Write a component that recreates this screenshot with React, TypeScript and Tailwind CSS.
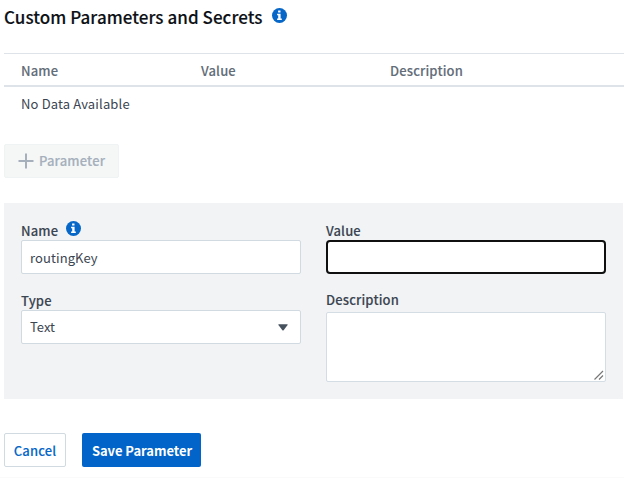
import React from "react";

function InfoIcon() {
  return (
    <svg viewBox="0 0 15 15" className="block h-[15px] w-[15px] shrink-0">
      <circle cx="7.5" cy="7.5" r="7.5" fill="#0667c8" />
      <path fill="#fff" d="M6.1 2.6h2.4v2H6.1zM5.1 5.7h3.5v4.9h1.2v1.5H5.1v-1.5h1.1V7.2H5.1z" />
    </svg>
  );
}

export default function App() {
  return (
    <main className="flex h-[478px] w-[624px] flex-col overflow-hidden border-b border-[#fafafa] bg-white pl-1 font-['Noto_Sans_CJK_SC','Noto_Sans',sans-serif] text-[13px] leading-5 text-[#3b4551]">
      <header className="flex h-[53px] items-start gap-[10px] pt-[5px]">
        <h1 className="w-[258px] whitespace-nowrap text-[17px] font-medium leading-6 tracking-[0.05px] text-[#0d1116] [-webkit-text-stroke:0.12px]">
          Custom Parameters and Secrets
        </h1>
        <div className="pt-[3px]">
          <InfoIcon />
        </div>
      </header>

      <section>
        <div className="grid h-[34px] grid-cols-[180px_189px_1fr] items-center border-b-2 border-t border-[#dde3e8] pl-[17px] pt-[3px] font-medium tracking-[0.15px] text-[#626d79] [-webkit-text-stroke:0.1px]">
          <span>Name</span>
          <span>Value</span>
          <span>Description</span>
        </div>
        <div className="h-[57px] pl-[17px] pt-[7px] tracking-[0.15px]">No Data Available</div>
      </section>

      <button className="flex h-[34px] w-[115px] items-center rounded-[2px] border border-[#f0f3f4] bg-[#f5f7f7] pl-[13px] font-medium tracking-[0.15px] text-[#a5b0bc] [-webkit-text-stroke:0.15px]">
        <svg viewBox="0 0 16 16" className="mr-[5px] h-4 w-4" fill="none" stroke="#a5b0bc" strokeWidth="2">
          <path d="M8 0.5V15.5M0.5 8H15.5" />
        </svg>
        Parameter
      </button>

      <section className="mt-[25px] flex h-[196px] w-[619px] gap-[25px] bg-[#f1f3f5] px-[17px] pt-[18px]">
        <div className="w-[280px]">
          <label className="flex h-[19px] gap-2 font-medium tracking-[0.15px] [-webkit-text-stroke:0.1px]">
            <span>Name</span>
            <InfoIcon />
          </label>
          <input
            className="block h-[34px] w-full rounded-[2px] border border-[#d0dae0] bg-white px-2 tracking-[0.1px] outline-none"
            defaultValue="routingKey"
          />
          <label className="mt-[17px] block h-[19px] font-medium tracking-[0.15px] [-webkit-text-stroke:0.1px]">Type</label>
          <div className="flex h-[34px] items-center justify-between rounded-[2px] border border-[#d0dae0] bg-white pl-2 pr-[12px]">
            <span>Text</span>
            <svg viewBox="0 0 10 7" className="h-[7px] w-[10px]" fill="#47525f">
              <path d="M0.8 0.3h8.4q.8 0 .4.7L5.6 6.2q-.6.6-1.2 0L.4 1q-.4-.7.4-.7z" />
            </svg>
          </div>
        </div>
        <div className="w-[280px]">
          <label className="block h-[19px] font-medium tracking-[0.15px] [-webkit-text-stroke:0.1px]">Value</label>
          <input className="block h-[34px] w-full rounded-[4px] border-2 border-[#101010] bg-white outline-none" />
          <label className="mt-4 block h-[22px] font-medium tracking-[0.15px] [-webkit-text-stroke:0.1px]">Description</label>
          <div className="flex h-[70px] w-full items-end justify-end rounded-[2px] border border-[#d3dde3] bg-white pb-px pr-px">
            <svg viewBox="0 0 10 10" className="h-[10px] w-[10px]" fill="none" stroke="#777" strokeWidth="1.2">
              <path d="M0.5 9.5L9 1M5 9.5L9 5.5" />
            </svg>
          </div>
        </div>
      </section>

      <footer className="mt-[34px] flex gap-4">
        <button className="h-[34px] w-[62px] rounded-[2px] border border-[#d0dae0] bg-white pt-px font-medium tracking-[0.15px] text-[#0667c8] [-webkit-text-stroke:0.1px]">
          Cancel
        </button>
        <button className="h-[34px] w-[119px] whitespace-nowrap rounded-[2px] bg-[#0264c8] pl-px pt-px font-bold tracking-[-0.05px] text-white">
          Save Parameter
        </button>
      </footer>
    </main>
  );
}
